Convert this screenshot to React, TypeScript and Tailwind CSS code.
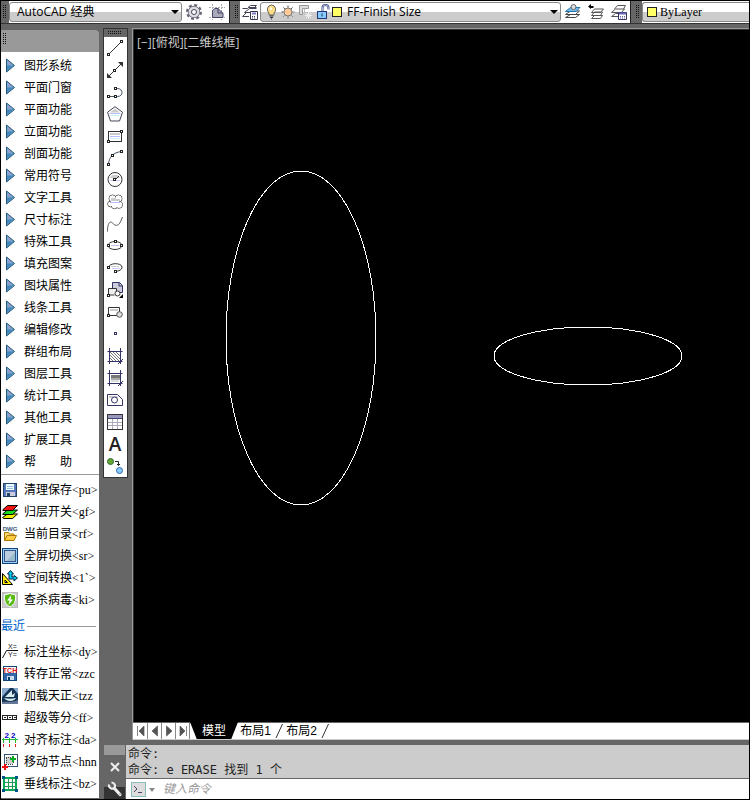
import type { ReactNode } from 'react';

const CJK = "font-['Liberation_Sans','Noto_Sans_CJK_SC',sans-serif]";
const LATIN = "font-['Liberation_Serif','Noto_Sans_CJK_SC',serif]";

const MENUS = [
  '图形系统', '平面门窗', '平面功能', '立面功能', '剖面功能', '常用符号', '文字工具',
  '尺寸标注', '特殊工具', '填充图案', '图块属性', '线条工具', '编辑修改', '群组布局',
  '图层工具', '统计工具', '其他工具', '扩展工具', '帮　　助',
];

interface IconProps {
  children: ReactNode;
  crisp?: boolean;
}

function Icon({ children, crisp }: IconProps) {
  return (
    <svg
      width="16"
      height="16"
      viewBox="0 0 16 16"
      fill="none"
      stroke="#333"
      shapeRendering={crisp ? 'crispEdges' : 'auto'}
      className="shrink-0"
      aria-hidden="true"
    >
      {children}
    </svg>
  );
}

/* Small hollow grip point used on most drawing icons */
function Node({ x, y, color = '#222' }: { x: number; y: number; color?: string }) {
  return <rect x={x - 1} y={y - 1} width="2" height="2" fill="#fff" stroke={color} shapeRendering="crispEdges" />;
}

function Grip({ className }: { className: string }) {
  return <span className={`block shrink-0 bg-[conic-gradient(#111_25%,transparent_0)] bg-[length:2px_2px] ${className}`} />;
}

interface DrawTool {
  name: string;
  icon: ReactNode;
}

const DRAW_TOOLS: DrawTool[] = [
  { name: '直线', icon: <Icon><path d="M1.5 14.5l13-13" /><Node x={1.5} y={14.5} /><Node x={14.5} y={1.5} /></Icon> },
  {
    name: '构造线',
    icon: (
      <Icon>
        <path d="M2 14L14 2" />
        <path d="M0 16v-5l5 5zM16 0v5l-5-5z" fill="#333" stroke="none" />
        <Node x={7.5} y={8.5} />
      </Icon>
    ),
  },
  {
    name: '多段线',
    icon: (
      <Icon>
        <path d="M1.5 12.5h9c6 0 6-8 0-8h-2" stroke="#456" />
        <Node x={1.5} y={12.5} /><Node x={8.5} y={12.5} /><Node x={8.5} y={4.5} />
      </Icon>
    ),
  },
  {
    name: '正多边形',
    icon: (
      <Icon>
        <path d="M8 .7l7.500 5.500-3 8.800h-9l-3-8.800z" fill="#fff" stroke="#445" />
        <path d="M8 2.500l5 4H3z" fill="#ccc" stroke="none" />
        <path d="M2.500 7.500h11" stroke="#bbf" /><path d="M3.500 9.500h9" stroke="#bee" />
      </Icon>
    ),
  },
  {
    name: '矩形',
    icon: (
      <Icon crisp>
        <rect x="1.5" y="3.500" width="13" height="10" fill="#fff" />
        <path d="M3 5.500h10M3 6.500h10" stroke="#ccc" /><path d="M3 8.500h10" stroke="#bbf" /><path d="M3 10.500h10" stroke="#cef" />
        <Node x={1.5} y={13.5} /><Node x={14.5} y={3.5} />
      </Icon>
    ),
  },
  {
    name: '圆弧',
    icon: (
      <Icon>
        <path d="M1.500 14.500C2 7 6 2.500 14.500 1.500" stroke="#456" />
        <Node x={1.5} y={14.5} /><Node x={5.5} y={5.5} /><Node x={14.5} y={1.5} />
      </Icon>
    ),
  },
  {
    name: '圆',
    icon: (
      <Icon>
        <circle cx="8" cy="7.500" r="7" fill="#fff" />
        <path d="M3 6a5.500 5.500 0 0110 0z" fill="#ccc" stroke="none" /><path d="M3 8.500h10" stroke="#ccf" />
        <path d="M8 8l4-4" /><Node x={7.5} y={7.5} />
      </Icon>
    ),
  },
  {
    name: '修订云线',
    icon: (
      <Icon>
        <g stroke="#555">
          <circle cx="5.500" cy="4.500" r="3.500" /><circle cx="11.500" cy="4.500" r="3.500" /><circle cx="3.500" cy="10" r="2.800" />
          <circle cx="7.500" cy="11.500" r="3.200" /><circle cx="12" cy="10.800" r="3.500" />
        </g>
        <g fill="#fff" stroke="none">
          <circle cx="5.500" cy="4.500" r="3" /><circle cx="11.500" cy="4.500" r="3" /><circle cx="3.500" cy="10" r="2.300" />
          <circle cx="7.500" cy="11.500" r="2.700" /><circle cx="12" cy="10.800" r="3" /><path d="M4 4h8v8H4z" />
        </g>
        <path d="M4 4h4l1 1h4v2H4z" fill="#ccc" stroke="none" /><path d="M3 8.500h10" stroke="#bbf" />
      </Icon>
    ),
  },
  { name: '样条曲线', icon: <Icon><path d="M.5 15.500C.5 7 3 4.500 5.500 7s4 3 6 1.500S14 4 15.500 1" stroke="#555" /></Icon> },
  {
    name: '椭圆',
    icon: (
      <Icon>
        <ellipse cx="8" cy="7.500" rx="7" ry="4" fill="#fff" />
        <path d="M4 7.500h8" stroke="#bbe" />
        <Node x={1.5} y={7.5} /><Node x={8.5} y={3.5} /><Node x={14.5} y={7.5} />
      </Icon>
    ),
  },
  {
    name: '椭圆弧',
    icon: (
      <Icon>
        <path d="M1.500 7.500C2 2.500 14.500 2.500 15 7c0 3-3 4-7 4.500" fill="#fff" />
        <path d="M4 6.500h8" stroke="#ccc" /><path d="M5 8.500h8" stroke="#ccf" />
        <Node x={1.5} y={7.5} /><Node x={8.5} y={11.5} />
      </Icon>
    ),
  },
  {
    name: '插入块',
    icon: (
      <Icon>
        <path d="M5.500 7V.5h7l3 3v7H12" fill="#ccd" stroke="#336" /><path d="M12 .5v3.500h3.500" stroke="#336" />
        <path d="M1.500 13v-6.500h8v5" fill="#eee" /><path d="M1.500 13h6" />
        <circle cx="10.500" cy="11.500" r="2.500" fill="#fff" /><Node x={1.5} y={13.5} />
        <path d="M16 12v4h-4z" fill="#000" stroke="none" />
      </Icon>
    ),
  },
  {
    name: '创建块',
    icon: (
      <Icon>
        <path d="M1.500 11.500v-8h11v8z" fill="#fff" /><path d="M3 6h8" stroke="#ccc" strokeWidth="2" />
        <circle cx="12.500" cy="10.500" r="2.800" fill="#ddd" stroke="#555" /><Node x={1.5} y={11.5} />
      </Icon>
    ),
  },
  { name: '点', icon: <Icon crisp><Node x={8.5} y={7.5} color="#336" /></Icon> },
  {
    name: '图案填充',
    icon: (
      <Icon>
        <path d="M3 4l9 9M3 7l6 6M3 10l3 3M6 4l7 7M9 4l4 4" stroke="#777" />
        <path d="M.5 3.500h15M.5 13.500h15M2.500 0v16M13.500 0v16M11 16l5-5" stroke="#336" />
      </Icon>
    ),
  },
  {
    name: '渐变色',
    icon: (
      <Icon>
        <path d="M4 5h9v3H4z" fill="#777" stroke="none" /><path d="M4 8h9v2H4z" fill="#aaa" stroke="none" /><path d="M4 10h8v2H4z" fill="#ddd" stroke="none" />
        <path d="M.5 3.500h15M.5 13.500h15M2.500 0v16M13.500 0v16M11 16l5-5" stroke="#336" />
      </Icon>
    ),
  },
  {
    name: '面域',
    icon: (
      <Icon>
        <path d="M.5 13.500v-11h10l5 5v6z" fill="#fff" stroke="#336" /><path d="M2 5h9" stroke="#ccc" strokeWidth="2" />
        <circle cx="7.500" cy="8" r="3" fill="#fff" stroke="#336" />
      </Icon>
    ),
  },
  {
    name: '表格',
    icon: (
      <Icon crisp>
        <rect x=".5" y=".5" width="15" height="15" fill="#fff" />
        <path d="M1 1h14v3H1z" fill="#99b" stroke="none" />
        <path d="M1 4.500h14" stroke="#447" /><path d="M1 8.500h14M1 11.500h14M5.500 5v10M10.500 5v10" stroke="#aab" />
      </Icon>
    ),
  },
  { name: '多行文字', icon: <span className="font-['Open_Sans',sans-serif] text-[19px] leading-4 font-semibold text-[#222]">A</span> },
  {
    name: '添加选定对象',
    icon: (
      <Icon>
        <circle cx="3.500" cy="3.500" r="3" fill="#6a3" stroke="#363" /><circle cx="12.500" cy="12.500" r="3" fill="#8cf" stroke="#36a" />
        <path d="M8 3.500h3.500v4M10 6l1.500 1.500L13 6" stroke="#222" />
      </Icon>
    ),
  },
];

interface PaletteItem {
  label: string;
  key: string;
  icon: ReactNode;
}

const COMMON: PaletteItem[] = [
  {
    label: '清理保存', key: '<pu>',
    icon: (
      <Icon crisp>
        <path d="M1.500 1.500h13v13h-13z" fill="#57b" stroke="#246" /><path d="M4 2h8v6H4z" fill="#eff" stroke="none" />
        <path d="M5 4.500h6M5 6.500h6" stroke="#9bd" /><path d="M4 10h9v4H4z" fill="#ccd" stroke="none" /><path d="M5 11h3v3H5z" fill="#246" stroke="none" />
      </Icon>
    ),
  },
  {
    label: '归层开关', key: '<gf>',
    icon: (
      <Icon>
        <path d="M.5 13.500l5-3.500h10l-5 4.500H2z" fill="#ee0" stroke="#000" /><path d="M.5 10l5-4h10l-5 4.500H1z" fill="#1d2" stroke="#000" />
        <path d="M.5 6l5-4.500h10L10.500 6.500H1z" fill="#e11" stroke="#000" />
      </Icon>
    ),
  },
  {
    label: '当前目录', key: '<rf>',
    icon: (
      <Icon>
        <text x="8" y="5" textAnchor="middle" fontSize="6" fontWeight="700" fontFamily="Liberation Sans, sans-serif" fill="#357" stroke="none">DWG</text>
        <path d="M2.500 14.500v-8h4l1 1.500h4.500v2" fill="#fd7" stroke="#a70" /><path d="M2.500 14.500l2.500-5h9.500l-2.500 5z" fill="#fc4" stroke="#a70" />
      </Icon>
    ),
  },
  {
    label: '全屏切换', key: '<sr>',
    icon: (
      <Icon crisp>
        <rect x=".5" y=".5" width="15" height="15" fill="#9cf" stroke="#147" /><rect x="2.500" y="2.500" width="11" height="11" fill="#bcd" stroke="#358" />
        <path d="M4 13L13 4v9z" fill="#9bc" stroke="none" />
      </Icon>
    ),
  },
  {
    label: '空间转换', key: '<1`>',
    icon: (
      <Icon>
        <path d="M.5 3.500v11h10z" fill="#fe0" stroke="#000" /><path d="M3 10v2.500h2.500z" fill="#fff" stroke="#000" />
        <path d="M7 9V4H5.500L8.500.5l3 3.500H10v3h2V5.500L15.500 8 12 11V9z" fill="#0ce" stroke="#024" />
      </Icon>
    ),
  },
  {
    label: '查杀病毒', key: '<ki>',
    icon: (
      <Icon>
        <rect x=".5" y=".5" width="15" height="15" fill="#ccc" stroke="#bbb" />
        <path d="M8 1.500l5.500 1.500c.5 6-1 9.500-5.500 12C3.500 12.500 2 9 2.500 3z" fill="#5b1" stroke="#fff" />
        <path d="M9.500 3L5 8.500h2.500L6.500 13 11 7.500H8.500z" fill="#fff" stroke="none" />
      </Icon>
    ),
  },
];

const RECENT: PaletteItem[] = [
  {
    label: '标注坐标', key: '<dy>',
    icon: (
      <Icon>
        <path d="M.5 14l4-7.500H16" stroke="#111" />
        <g fontSize="7" fontFamily="Liberation Sans, sans-serif" fill="#111" stroke="none">
          <text x="6" y="5">X=</text>
          <text x="6" y="13">Y=</text>
        </g>
      </Icon>
    ),
  },
  {
    label: '转存正常', key: '<zzc',
    icon: (
      <Icon crisp>
        <rect x="1.500" y=".5" width="13" height="14" fill="#36a" stroke="#147" /><path d="M2 1h12v6H2z" fill="#fff" stroke="none" />
        <path d="M5 10h7v4H5z" fill="#cde" stroke="none" /><path d="M6 11h2v3H6z" fill="#036" stroke="none" />
        <text x="8" y="7" textAnchor="middle" fontSize="7" fontWeight="700" fontFamily="Liberation Sans, sans-serif" fill="#d11" stroke="none">TCH</text>
      </Icon>
    ),
  },
  {
    label: '加载天正', key: '<tzz',
    icon: (
      <Icon>
        <rect width="16" height="16" fill="#135" stroke="none" /><path d="M0 0h8L0 9zM11 0h5v6z" fill="#8ac" stroke="none" />
        <path d="M3 9l4-4 3-3v5l3-2-1 4zM2 10c4 1 8 1 12 0-2 4-9 4-12 0z" fill="#dee" stroke="none" /><path d="M0 14c4-1 9 1 16-2v4H0z" fill="#679" stroke="none" />
      </Icon>
    ),
  },
  { label: '超级等分', key: '<ff>', icon: <Icon crisp><path d="M.5 5.500h14v4H.5zM5.500 5.500v4M10.500 5.500v4M2 7.500h2M7 7.500h2M12 7.500h2" stroke="#222" /></Icon> },
  {
    label: '对齐标注', key: '<da>',
    icon: (
      <Icon crisp>
        <path d="M0 7.500h16M1.500 6v5M7.500 6v5M13.500 6v5" stroke="#2b3" /><path d="M1.500 12v3M7.500 12v3M13.500 12v3" stroke="#d22" />
        <text x="8" y="6" textAnchor="middle" fontSize="8" fontWeight="700" fontFamily="Liberation Sans, sans-serif" fill="#00c" stroke="none">2 2</text>
      </Icon>
    ),
  },
  {
    label: '移动节点', key: '<hnn',
    icon: (
      <Icon crisp>
        <rect x="2.500" y=".5" width="13" height="12" fill="#fff" stroke="#357" /><path d="M4 3h7v7H4z" fill="#ccc" stroke="#444" strokeDasharray="1 1" />
        <path d="M11 1.500v6M8 4.500h6" stroke="#0a2" strokeWidth="2" /><path d="M3 10v6M0 13h6" stroke="#e11" strokeWidth="2" />
      </Icon>
    ),
  },
  {
    label: '垂线标注', key: '<bz>',
    icon: (
      <Icon crisp>
        <path d="M0 2h16M0 14h16M2 0v16M14 0v16" stroke="#0a5" strokeWidth="2" />
        <path d="M2 6.500h13M2 10.500h13M6.500 2v13M10.500 2v13" stroke="#295" /><path d="M0 0h3v3H0zM13 0h3v3h-3zM0 13h3v3H0zM13 13h3v3h-3z" fill="#058" stroke="none" />
      </Icon>
    ),
  },
];

function MenuArrow() {
  return (
    <Icon>
      <path d="M4.500 1v13l8-6.500z" fill="#7ac" stroke="#257" />
      <path d="M5 7.500v5.500l7-5.500z" fill="#48b" stroke="none" />
      <path d="M6 3l4 3.500H6z" fill="#99c" stroke="none" />
    </Icon>
  );
}

function PaletteRow({ label, shortcut, icon }: { label: string; shortcut?: string; icon: ReactNode }) {
  return (
    <button type="button" className="flex h-[22px] w-full items-center gap-1.5 overflow-hidden pl-px text-left whitespace-nowrap">
      {icon}
      <span className="flex text-xs leading-4">
        {label}
        {shortcut && <span className={LATIN}>{shortcut}</span>}
      </span>
    </button>
  );
}

function SidePalette() {
  return (
    <aside className="mt-1.5 flex w-[98px] shrink-0 flex-col">
      <div className="h-[22px] rounded-tr bg-[#999] pt-[3px] pl-px">
        <Grip className="h-3 w-1" />
      </div>
      <div className="mb-px flex-1 bg-white pt-[3px]">
        <nav>
          {MENUS.map(name => (
            <PaletteRow key={name} label={name} icon={<MenuArrow />} />
          ))}
        </nav>
        <div className="mt-px border-t border-[#999] pt-1">
          {COMMON.map(item => (
            <PaletteRow key={item.key} label={item.label} shortcut={item.key} icon={item.icon} />
          ))}
        </div>
        <h2 className="flex h-[30px] items-center gap-0.5 pr-[3px] text-xs text-[#06c]">
          最近
          <span className="h-px flex-1 bg-[#999]" />
        </h2>
        {RECENT.map(item => (
          <PaletteRow key={item.key} label={item.label} shortcut={item.key} icon={item.icon} />
        ))}
      </div>
    </aside>
  );
}

function LayerStack({ children, blue }: { children?: ReactNode; blue?: boolean }) {
  return (
    <Icon>
      <path d="M.5 13.500l5-3h9l-4 3zM.5 10.500l5-3.500h9l-4 3.500z" fill="#fff" stroke="#444" />
      <path d="M.5 7.500l5-4h9.500l-4 4z" fill={blue ? '#7be' : '#fff'} stroke={blue ? '#27a' : '#555'} />
      {children}
    </Icon>
  );
}

function ComboArrow() {
  return <span className="pointer-events-none h-0 w-0 border-x-4 border-t-4 border-x-transparent border-t-black" />;
}

const COMBO = 'flex h-5 items-center rounded-[3px] border border-[#888] bg-[linear-gradient(#fff_50%,#ccc_50%)]';

function TopBar() {
  return (
    <header className="flex h-[23px] shrink-0 items-center overflow-hidden border-b border-[#333] bg-white">
      <div className="flex h-full w-2 shrink-0 items-center bg-[#666] pl-px"><Grip className="h-3.5 w-1" /></div>
      <label className={`${COMBO} w-[173px] shrink-0 pr-0.5 pl-[7px]`}>
        <select
          aria-label="工作空间"
          className="w-full min-w-0 appearance-none font-['Open_Sans','Noto_Sans_CJK_SC',sans-serif] text-xs leading-4 outline-none"
        >
          <option>AutoCAD 经典</option>
        </select>
        <ComboArrow />
      </label>
      <div className="flex w-[47px] shrink-0 items-center justify-center gap-[7px]">
        <button type="button" aria-label="工作空间设置">
          <Icon>
            <circle cx="8" cy="8" r="6.800" stroke="#667" strokeWidth="2.400" strokeDasharray="2.900 2.440" />
            <circle cx="8" cy="8" r="5.800" fill="#ddd" stroke="#778" /><circle cx="8" cy="8" r="2.500" fill="#fff" stroke="#446" />
          </Icon>
        </button>
        <button type="button" aria-label="我的工作空间">
          <Icon>
            <path d="M3.500 0v16M12.500 0v16M0 3.500h16M0 13.500h16" stroke="#aaa" strokeDasharray="2 1" />
            <path d="M3.500 13.500V6.500L6 4.500h3l5 5v4z" fill="#aab" stroke="#446" /><path d="M9 4v5h5" stroke="#446" />
          </Icon>
        </button>
      </div>
      <div className="flex h-full w-[11px] shrink-0 items-center border-l border-[#222] bg-[#666] pl-1"><Grip className="h-3.5 w-1" /></div>
      <button type="button" aria-label="图层特性管理器" className="mx-0.5 shrink-0">
        <Icon>
          <path d="M6 3.500l2.500-2h6l-3 3M.5 4.500h5l1-1h8M8 8.500H2.500l5-4h7M7 12.500H.5l4-4M4 12.500" stroke="#445" />
          <path d="M8.500 7.500h7v8h-7z" fill="#fff" stroke="#335" /><path d="M10 9.500h4" stroke="#77b" strokeWidth="2" /><path d="M10 12.500h4M10 14h4" stroke="#335" strokeDasharray="1 1" />
        </Icon>
      </button>
      <div className={`${COMBO} min-w-0 flex-1 gap-px px-0.5`}>
        <Icon>
          <path d="M8.500 1a4.500 4.500 0 00-2.500 8v2h5V9a4.500 4.500 0 00-2.500-8z" fill="#fd8" stroke="#665" /><path d="M7 3.500h2v2H7z" fill="#fff" stroke="none" />
          <path d="M6.500 12h4M7 13.500h3M8 15h1" stroke="#334" />
        </Icon>
        <Icon>
          <path d="M8 1.500v13M1.500 8h13M3.500 3.500l9 9M12.500 3.500l-9 9" stroke="#444" strokeDasharray="2 1" />
          <circle cx="8" cy="8" r="4" fill="#fc9" stroke="#777" />
        </Icon>
        <Icon>
          <path d="M2.500 1.500h9v3h-6v6h-3z" fill="#ddd" stroke="#999" /><path d="M7.500 4.500v4h4" stroke="#bbb" /><path d="M11.500 8v7M8 11.500h7M9 9l5 5M14 9l-5 5" stroke="#eee" />
        </Icon>
        <Icon>
          <path d="M8.500 7V4a3 3 0 016 0v1.500" stroke="#348" strokeWidth="2" /><path d="M8.500 7V4a3 3 0 016 0v1.500" stroke="#fff" strokeWidth=".6" />
          <rect x="3.500" y="7.500" width="9" height="7" fill="#8cf" stroke="#237" /><path d="M8 9.500v3" stroke="#136" />
        </Icon>
        <span className="ml-px size-2.5 shrink-0 border border-[#222] bg-[#ff6]" />
        <select
          aria-label="图层"
          className="ml-1 min-w-0 flex-1 appearance-none font-['Open_Sans','Noto_Sans_CJK_SC',sans-serif] text-xs leading-4 outline-none"
        >
          <option>FF-Finish Size</option>
        </select>
        <ComboArrow />
      </div>
      <div className="flex w-[69px] shrink-0 items-center justify-center gap-[7px]">
        <button type="button" aria-label="置为当前图层"><LayerStack blue><circle cx="8.500" cy="3" r="2.500" fill="#ddd" stroke="#666" /></LayerStack></button>
        <button type="button" aria-label="上一个图层">
          <Icon>
            <path d="M3.500 14.500l3-3h8l-2 3zM3.500 11.500l3-3.500h8l-2 3.500zM3.500 8.500l3-3.500h9l-3 3.500z" fill="#fff" stroke="#555" />
            <path d="M0 2.500L3 0v2h2.500v2H3v1z" fill="#000" stroke="none" />
          </Icon>
        </button>
        <button type="button" aria-label="图层状态管理器">
          <Icon>
            <path d="M.5 12.500l4-3h6M.5 12.500h7M.5 8.500l4-3.500h9l-3 3.500zM3.500 5l3-3.500h8l-2 3.500" fill="#fff" stroke="#555" />
            <path d="M7.500 8.500h8v7h-8z" fill="#fff" stroke="#336" /><path d="M8 9.500h7" stroke="#66b" strokeWidth="2" /><path d="M9 12.500h5M9 14h5" stroke="#669" strokeDasharray="1 1" />
          </Icon>
        </button>
      </div>
      <div className="flex h-full w-3 shrink-0 items-center border-l border-[#222] bg-[#666] pl-1"><Grip className="h-3.5 w-1" /></div>
      <div className={`${COMBO} w-[107px] shrink-0 rounded-r-none border-r-0 pl-1`}>
        <span className="size-2.5 shrink-0 border border-[#222] bg-[#ff6]" />
        <select aria-label="颜色" className={`${LATIN} ml-[3px] min-w-0 flex-1 appearance-none text-xs leading-4 outline-none`}>
          <option>ByLayer</option>
        </select>
      </div>
    </header>
  );
}

function DrawToolbar() {
  return (
    <div role="toolbar" aria-label="绘图" className="mt-1 w-[25px] shrink-0 self-start border border-[#333] bg-white">
      <div className="flex h-2 items-center bg-[#666] pl-[3px]"><Grip className="h-1 w-3.5" /></div>
      {DRAW_TOOLS.map(tool => (
        <button key={tool.name} type="button" title={tool.name} className="flex h-[22px] w-full items-center justify-center pr-px">
          {tool.icon}
        </button>
      ))}
    </div>
  );
}

const NAV_SHAPES = ['M3.500 1v10M10 1v10L5 6z', 'M9.500 1v10L4 6z', 'M4.500 1v10L10 6z', 'M10.500 1v10M4 1v10l5-5z'];
const NAV_NAMES = ['第一个布局', '上一个布局', '下一个布局', '最后一个布局'];

function LayoutTabs() {
  return (
    <div className="flex h-[18px] shrink-0 items-stretch border-t border-b border-t-[#666] border-b-[#ccc] bg-white pl-px text-xs leading-4">
      {NAV_SHAPES.map((d, i) => (
        <button key={d} type="button" aria-label={NAV_NAMES[i]} className="w-3.5 shrink-0 border-r border-[#888]">
          <svg width="13" height="12" viewBox="0 0 13 12" fill="#555" stroke="#555" strokeWidth=".7" aria-hidden="true"><path d={d} /></svg>
        </button>
      ))}
      <button type="button" className="-mt-px w-12 bg-black text-white [clip-path:polygon(0_0,100%_0,86%_100%,14%_100%)]">模型</button>
      {['布局1', '布局2'].map(name => (
        <div key={name} className="flex">
          <button type="button" className="w-[35px] text-center">{name}</button>
          <svg width="11" height="16" viewBox="0 0 11 16" stroke="#333" aria-hidden="true"><path d="M3 15L9.500 1" /></svg>
        </div>
      ))}
    </div>
  );
}

function Drawing() {
  return (
    <main className="mt-1 ml-1 flex min-w-0 flex-1 flex-col border-t border-l border-[#999]">
      <div className="relative flex-1 border-t border-l border-[#333] bg-black">
        <svg className="absolute inset-0 h-full w-full" fill="none" stroke="#fff" shapeRendering="crispEdges" aria-label="椭圆">
          <ellipse cx="167" cy="308" rx="75" ry="167" />
          <ellipse cx="454" cy="326" rx="94" ry="29" />
        </svg>
        <p className="absolute top-[5px] left-[3px] font-['Open_Sans','Noto_Sans_CJK_SC',sans-serif] text-xs leading-4 text-[#ccc]">[−][俯视][二维线框]</p>
      </div>
      <LayoutTabs />
    </main>
  );
}

function CommandLine() {
  return (
    <section className="mt-[5px] flex shrink-0 pl-px">
      <div className="flex w-[21px] shrink-0 flex-col items-center">
        <div className="h-2.5 w-full bg-[#999]" />
        <button type="button" aria-label="关闭" className="flex flex-1 items-center">
          <svg width="10" height="10" viewBox="0 0 10 10" stroke="#eee" strokeWidth="2" aria-hidden="true"><path d="M1 1l8 8M9 1L1 9" /></svg>
        </button>
        <button type="button" aria-label="自定义" className="flex h-5 w-full items-center justify-center bg-[linear-gradient(#666_40%,#333_40%)]">
          <svg width="16" height="16" viewBox="0 0 16 16" fill="none" stroke="#eee" aria-hidden="true">
            <path d="M2 3.500c-.5 4 3.500 5 5.500 3.500C9 5 7.500 1.500 4.500 1.500" strokeWidth="2.200" />
            <path d="M7.500 7.500l5.500 6" strokeWidth="3.200" strokeLinecap="round" />
            <path d="M12.500 13.200h1" stroke="#444" />
          </svg>
        </button>
      </div>
      <div className="ml-px min-w-0 flex-1">
        <div className="border-b border-[#666] bg-[#ccc] pt-px pl-0.5 font-['DejaVu_Sans_Mono','Noto_Sans_CJK_SC',monospace] text-xs leading-4 text-[#222]">
          <p>命令:</p>
          <p>命令: e ERASE 找到 1 个</p>
        </div>
        <label className="flex h-5 items-center bg-white pl-[5px]">
          <svg width="24" height="15" viewBox="0 0 24 15" fill="none" aria-label="命令" className="shrink-0">
            <rect x=".5" y=".5" width="14" height="14" fill="#ddd" stroke="#8bb" />
            <path d="M3 4l3 3-3 3M7 10.500h4" stroke="#446" /><path d="M18 6h6l-3 4z" fill="#888" />
          </svg>
          <input type="text" placeholder="键入命令" className="ml-2 min-w-0 flex-1 text-xs leading-4 italic outline-none placeholder:text-[#999]" />
        </label>
      </div>
    </section>
  );
}

export default function App() {
  return (
    <div className={`${CJK} flex min-h-screen flex-col border border-black bg-[#666] text-black`}>
      <TopBar />
      <div className="flex flex-1">
        <SidePalette />
        <div className="ml-1 flex min-w-0 flex-1 flex-col">
          <div className="flex flex-1">
            <DrawToolbar />
            <Drawing />
          </div>
          <CommandLine />
        </div>
      </div>
    </div>
  );
}
